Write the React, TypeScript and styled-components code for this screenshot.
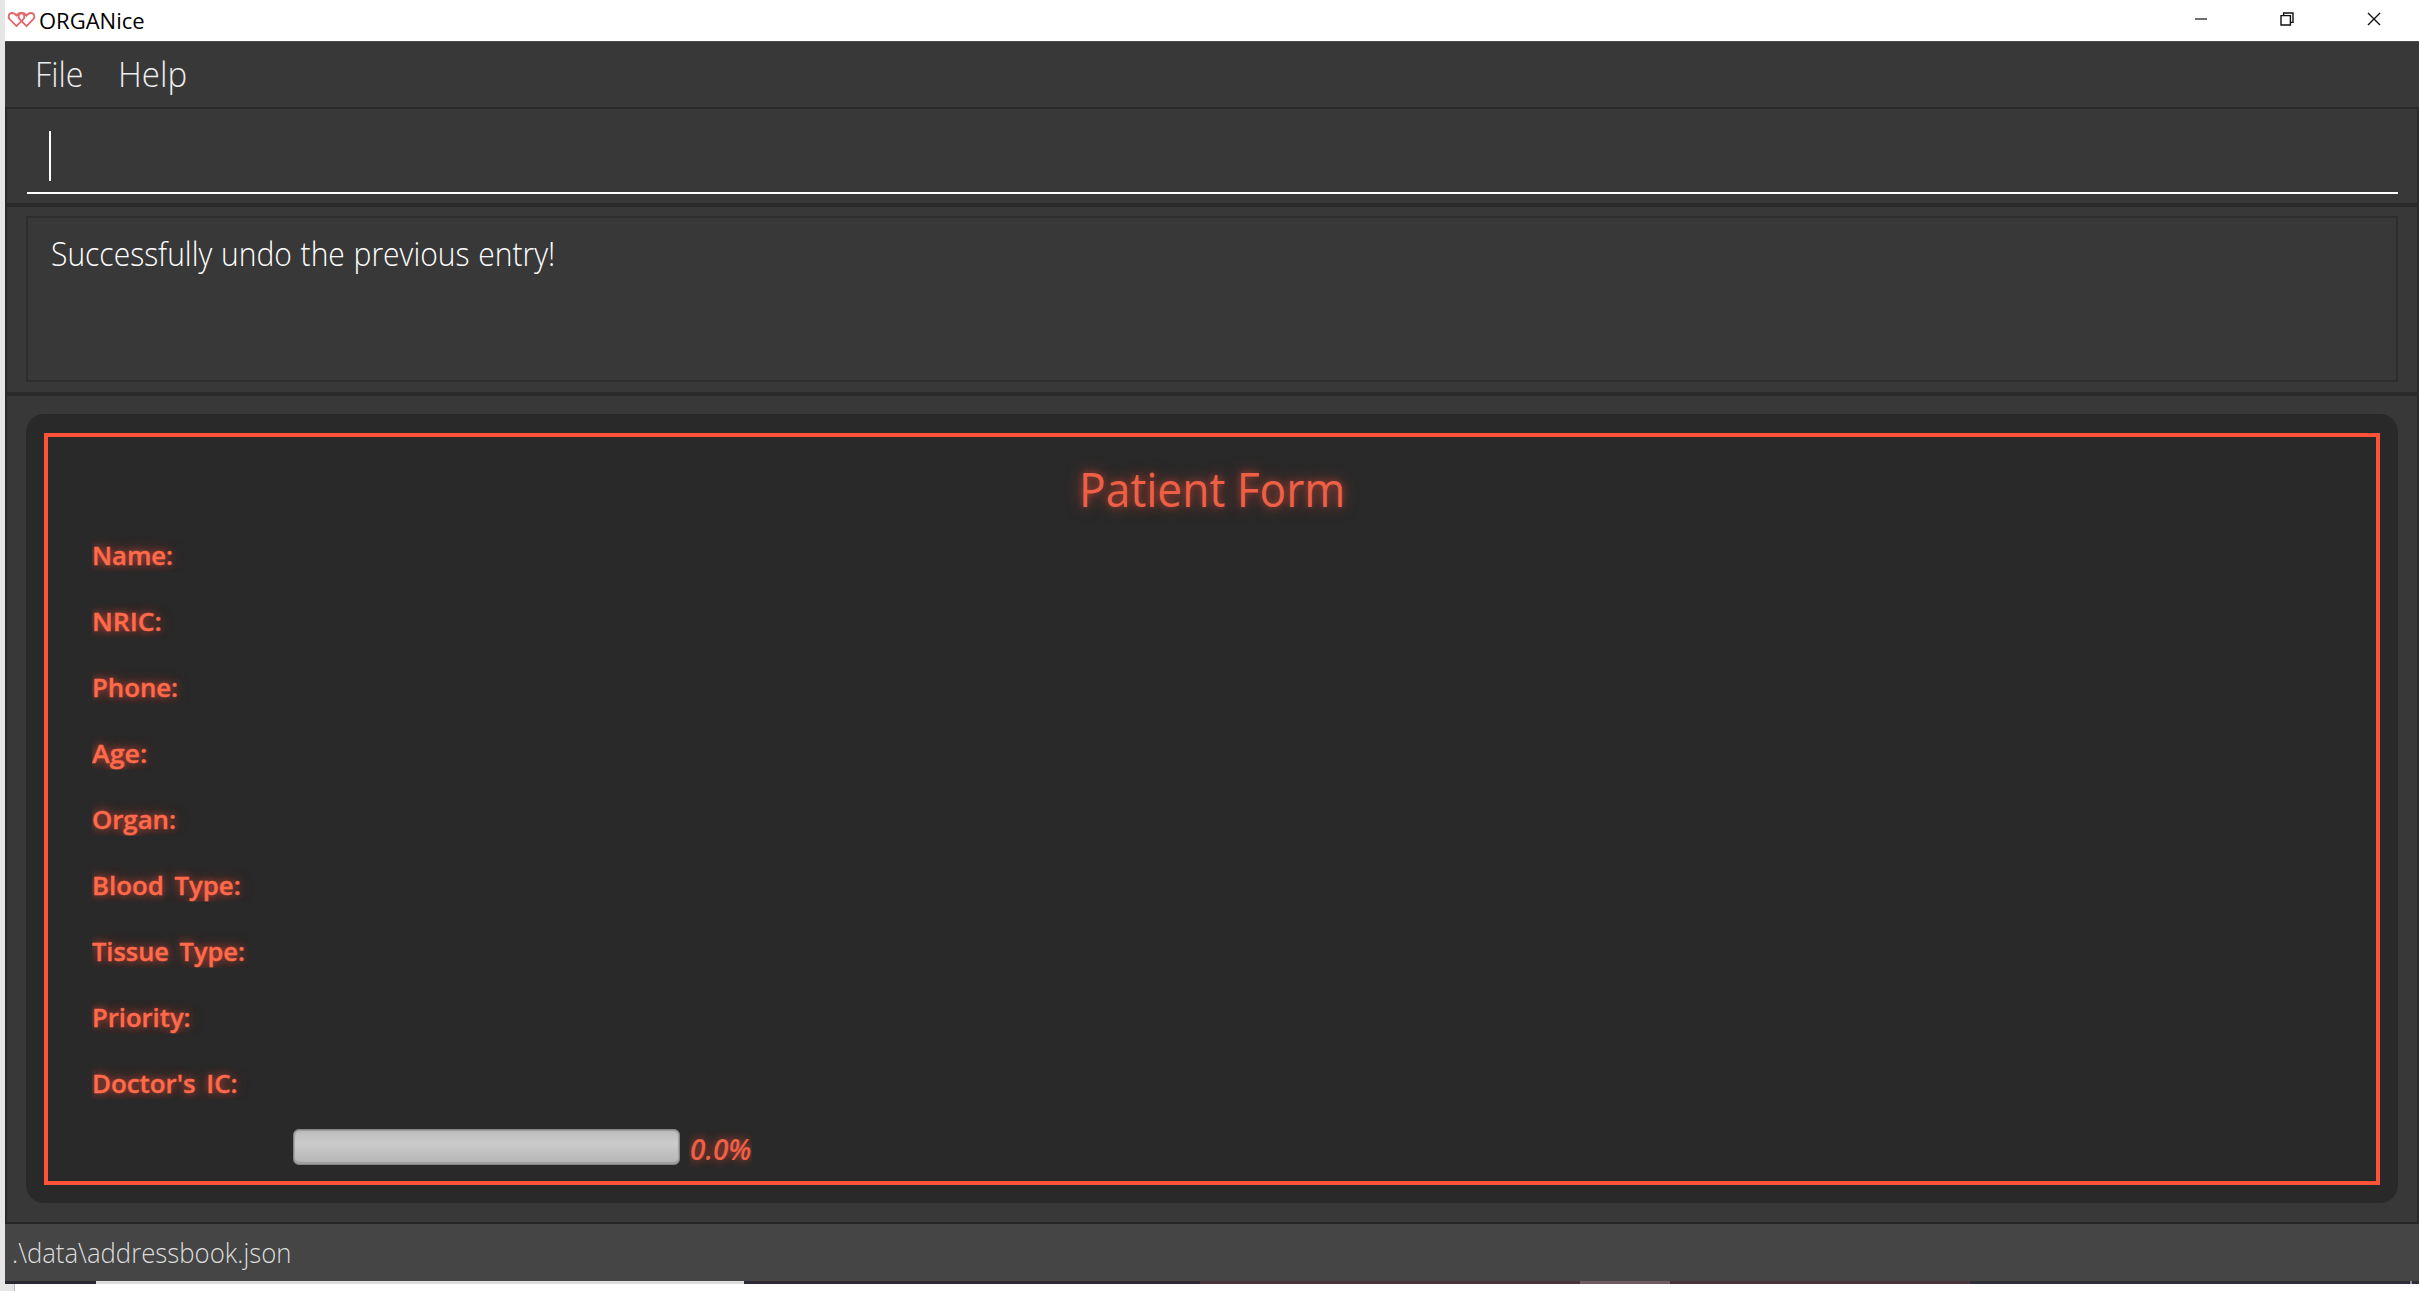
import React from 'react';
import styled, { createGlobalStyle } from 'styled-components';

const GlobalStyle = createGlobalStyle`
  * { box-sizing: border-box; }
  body {
    margin: 0;
    background: #ffffff;
    font-family: "Open Sans", "Noto Sans", sans-serif;
    overflow: hidden;
  }
`;

const Screen = styled.div`
  display: grid;
  grid-template-rows: 1284px 7px;
  width: 2421px;
  height: 1291px;
`;

const Desktop = styled.div`
  display: flex;
  background: #ffffff;
`;

const DesktopEdge = styled.div`
  width: 5px;
  background: #e6e6e6;
`;

const Below = styled.div`
  width: 15px;
  background: #e6e6e6;
  border-right: 1px solid #bdbdbd;
`;

const Window = styled.div`
  display: flex;
  flex-direction: column;
  width: 2414px;
`;

const TitleBar = styled.header`
  display: flex;
  align-items: flex-start;
  height: 41px;
  background: #ffffff;
`;

const AppIcon = styled.svg`
  margin: 11px 0 0 2px;
`;

const Squeezed = styled.span<{ $x?: number; $origin?: string; $gap?: number }>`
  display: inline-block;
  white-space: pre;
  word-spacing: ${(p) => p.$gap ?? 0}px;
  transform: scaleX(${(p) => p.$x ?? 1});
  transform-origin: ${(p) => p.$origin ?? 'left'} center;
`;

const AppName = styled.div`
  flex: 1;
  margin-left: 3px;
  font-size: 22px;
  line-height: 41px;
  color: #000000;
`;

const WindowControls = styled.div`
  display: flex;
  height: 38px;
  padding-right: 2px;
`;

const Control = styled.div`
  display: flex;
  align-items: center;
  justify-content: center;
  width: 86.5px;
`;

const MenuBar = styled.nav`
  display: flex;
  height: 68px;
  padding-left: 30px;
  background: #383838;
  border-top: 1px solid #4d4d4d;
  border-bottom: 2px solid #2a2a2a;
  font-size: 35px;
  font-weight: 300;
  line-height: 63px;
  color: #ededed;
`;

const MenuItem = styled.div<{ $width: number }>`
  width: ${(p) => p.$width}px;
`;

const Body = styled.main`
  display: flex;
  flex-direction: column;
  flex: 1;
  border-left: 2px solid #2a2a2a;
  border-right: 2px solid #2a2a2a;
  border-bottom: 2px solid #262626;
  background: #383838;
`;

const CommandPane = styled.section`
  height: 98px;
  padding: 0 19px 0 20px;
  border-bottom: 4px solid #2a2a2a;
`;

const CommandField = styled.div`
  height: 85px;
  padding: 22px 0 0 22px;
  border-bottom: 2px solid #ffffff;
`;

const Caret = styled.div`
  width: 2px;
  height: 50px;
  background: #ffffff;
`;

const ResultPane = styled.section`
  height: 189px;
  padding: 9px 19px 0;
  border-bottom: 4px solid #2a2a2a;
`;

const ResultBox = styled.div`
  height: 166px;
  padding: 13px 0 0 23px;
  border: 2px solid #2d2d2d;
  font-size: 33px;
  font-weight: 300;
  line-height: 46px;
  color: #ffffff;
`;

const FormPane = styled.section`
  padding: 18px 19px 0;
`;

const Card = styled.div`
  height: 789px;
  padding: 19px 18px 18px;
  border-radius: 18px;
  background: #292929;
`;

const Form = styled.div`
  height: 752px;
  border: 4px solid #ff5238;
  color: #ff5238;
`;

const FormTitle = styled.h1`
  height: 100px;
  margin: 0;
  padding-top: 17px;
  text-align: center;
  font-size: 48px;
  font-weight: 400;
  line-height: 70px;
  color: #ee6046;
  text-shadow: 0 0 8px rgba(255, 82, 56, 0.45), 0 0 15px rgba(255, 82, 56, 0.5);
`;

const Fields = styled.div`
  display: grid;
  grid-template-rows: repeat(9, 66px);
  height: 592px;
  padding-left: 44px;
`;

const FieldLabel = styled.div`
  justify-self: start;
  height: 35px;
  padding-right: 12px;
  overflow: hidden;
  font-size: 26px;
  font-weight: 600;
  line-height: 37px;
  color: #ff6a4b;
  -webkit-text-stroke: 0.4px #ff6a4b;
  text-shadow: 0 0 7px rgba(255, 82, 56, 0.5), 0 0 13px rgba(255, 82, 56, 0.55);
`;

const ProgressRow = styled.div`
  display: flex;
  padding-left: 245px;
`;

const ProgressBar = styled.div`
  width: 387px;
  height: 36px;
  border: 1px solid #858585;
  border-radius: 6px;
  background: linear-gradient(#bcbcbc, #cbcbcb 40%, #b7b7b7 92%, #a4a4a4);
  box-shadow: inset 0 1px 1px #9b9b9b, inset 0 -2px 1px #9d9d9d, inset 1px 0 1px #a8a8a8, inset -1px 0 1px #a8a8a8;
`;

const Percent = styled.div`
  width: 63px;
  height: 38px;
  margin: 2px 0 0 9px;
  padding-left: 1px;
  overflow: hidden;
  font-size: 28px;
  font-style: italic;
  font-weight: 600;
  line-height: 36px;
  color: #ee6046;
  text-shadow: 0 0 8px rgba(255, 82, 56, 0.4), 0 0 13px rgba(255, 82, 56, 0.4);
`;

const StatusBar = styled.footer`
  height: 57px;
  padding-left: 7px;
  background: #454545;
  font-size: 27.5px;
  font-weight: 300;
  line-height: 58px;
  color: #dddddd;
`;

const TaskEdge = styled.div`
  display: flex;
  height: 3px;
`;

const Segment = styled.div<{ $width?: number; $fill: string }>`
  ${(p) => (p.$width ? `width: ${p.$width}px;` : 'flex: 1;')}
  background: ${(p) => p.$fill};
`;

const fields: { label: string; scale: number; gap?: number }[] = [
  { label: 'Name:', scale: 0.985 },
  { label: 'NRIC:', scale: 1.02 },
  { label: 'Phone:', scale: 0.99 },
  { label: 'Age:', scale: 1.03 },
  { label: 'Organ:', scale: 0.99 },
  { label: 'Blood Type:', scale: 0.992, gap: 4 },
  { label: 'Tissue Type:', scale: 0.978, gap: 4 },
  { label: 'Priority:', scale: 0.985 },
  { label: "Doctor's IC:", scale: 0.994, gap: 4 },
];

export default function App() {
  return (
    <Screen>
      <GlobalStyle />
      <Desktop>
        <DesktopEdge />
        <Window>
          <TitleBar>
            <AppIcon width="29" height="18" viewBox="0 0 29 18" fill="none" stroke="#e0676a" strokeWidth="1.8" strokeLinejoin="round">
              <path d="M9.5 15.2 L2.6 8.2 C0.6 5.8 1.8 2 5 2 C7 2 8.4 3 9.5 4.8 C10.6 3 12 2 14 2 C17.2 2 18.4 5.8 16.4 8.2 Z" />
              <path d="M19.5 15.2 L12.6 8.2 C10.6 5.8 11.8 2 15 2 C17 2 18.4 3 19.5 4.8 C20.6 3 22 2 24 2 C27.2 2 28.4 5.8 26.4 8.2 Z" />
            </AppIcon>
            <AppName>ORGANice</AppName>
            <WindowControls>
              <Control>
                <svg width="14" height="14" viewBox="0 0 14 14" stroke="#111" strokeWidth="1.2">
                  <path d="M1 7 H13" />
                </svg>
              </Control>
              <Control>
                <svg width="14" height="14" viewBox="0 0 14 14" fill="none" stroke="#111" strokeWidth="1.4">
                  <path d="M1 3.6 H10.4 V13 H1 Z M3.6 3.6 V1 H13 V10.4 H10.4" />
                </svg>
              </Control>
              <Control>
                <svg width="14" height="14" viewBox="0 0 14 14" stroke="#111" strokeWidth="1.4">
                  <path d="M1 1 L13 13 M13 1 L1 13" />
                </svg>
              </Control>
            </WindowControls>
          </TitleBar>
          <MenuBar>
            <MenuItem $width={83}>
              <Squeezed $x={0.92}>File</Squeezed>
            </MenuItem>
            <MenuItem $width={90}>
              <Squeezed $x={0.944}>Help</Squeezed>
            </MenuItem>
          </MenuBar>
          <Body>
            <CommandPane>
              <CommandField>
                <Caret />
              </CommandField>
            </CommandPane>
            <ResultPane>
              <ResultBox>
                <Squeezed $x={0.91} $gap={1}>Successfully undo the previous entry!</Squeezed>
              </ResultBox>
            </ResultPane>
            <FormPane>
              <Card>
                <Form>
                  <FormTitle>
                    <Squeezed $x={0.923} $origin="center">Patient Form</Squeezed>
                  </FormTitle>
                  <Fields>
                    {fields.map((f) => (
                      <FieldLabel key={f.label}>
                        <Squeezed $x={f.scale} $gap={f.gap}>{f.label}</Squeezed>
                      </FieldLabel>
                    ))}
                  </Fields>
                  <ProgressRow>
                    <ProgressBar />
                    <Percent>0.0%</Percent>
                  </ProgressRow>
                </Form>
              </Card>
            </FormPane>
          </Body>
          <StatusBar>
            <Squeezed $x={0.936}>.\data\addressbook.json</Squeezed>
          </StatusBar>
          <TaskEdge>
            <Segment $width={91} $fill="#2b2733" />
            <Segment $width={648} $fill="#dcdcdc" />
            <Segment $width={456} $fill="#2d2833" />
            <Segment $width={380} $fill="#49333a" />
            <Segment $width={90} $fill="#6f5c60" />
            <Segment $width={300} $fill="#49333a" />
            <Segment $fill="#2e2e38" />
            <Segment $width={2} $fill="#8a8a90" />
            <Segment $width={7} $fill="#2e2e38" />
          </TaskEdge>
        </Window>
      </Desktop>
      <Below />
    </Screen>
  );
}
